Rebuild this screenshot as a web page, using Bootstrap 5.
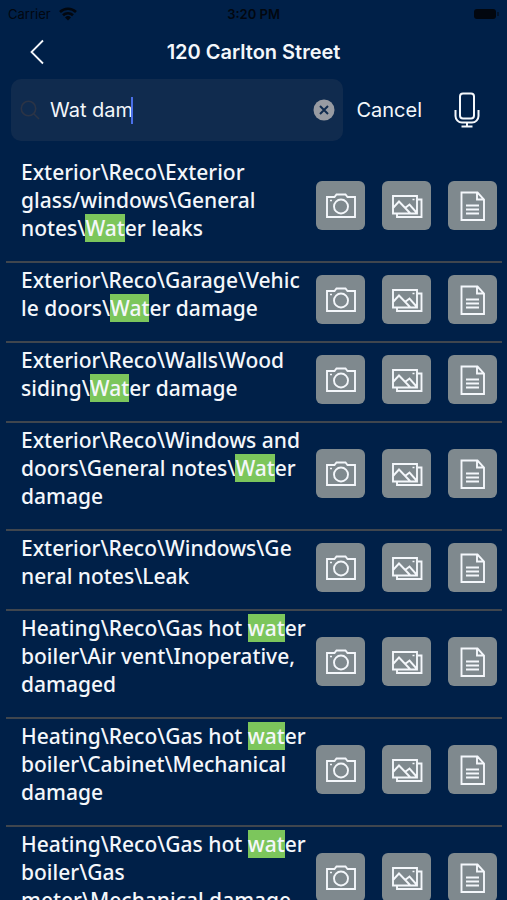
<!DOCTYPE html>
<html lang="en">
<head>
<meta charset="utf-8">
<meta name="viewport" content="width=device-width, initial-scale=1">
<title>120 Carlton Street</title>
<link href="https://cdn.jsdelivr.net/npm/bootstrap@5.3.0/dist/css/bootstrap.min.css" rel="stylesheet">
<style>
body { background: #002048; color: #f4f7fb; font-family: Inter, "Liberation Sans", sans-serif; }
.screen { height: 100vh; }
.screen > * { flex-shrink: 0; }
svg { display: block; fill: none; stroke: currentColor; }
.status { height: 28px; padding: 0 8px; color: #02070f; font-size: 13px; line-height: 28px; }
.status .side, .titlebar .side { flex: 1 1 0; }
.titlebar { height: 48px; padding: 0 20px; }
.titlebar h1 { font-size: 20px; line-height: 28px; font-weight: 600; }
.plain { background: none; border: 0; padding: 0; color: inherit; text-decoration: none; }
.back { padding: 0 10px; }
.searchbar { padding: 3px 27px 14px 11px; }
.field { height: 62px; padding: 0 8px 0 9px; border-radius: 10px; background: #102b4e; }
.glass { color: #2b3446; }
.query { width: 81px; margin-left: 10px; padding: 0; border: 0; outline: 0; background: none; color: inherit; font-size: 20px; line-height: 28px; }
.caret { width: 2px; height: 27px; background: #4a6fe8; }
.cancel { margin-left: 13px; font-size: 20px; line-height: 28px; }
.mic { margin-left: 32px; }
.results { padding: 0 5px 0 6px; }
.result { padding: 3px 5px 0 15px; border-bottom: 2px solid #40464e; }
.path { flex: 1 1 0; min-width: 0; padding-bottom: 19px; font: 500 21px/28px "Noto Sans", "Open Sans", sans-serif; overflow-wrap: anywhere; }
.path mark { padding: 0; background: #7cc65c; color: inherit; }
.actions { gap: 17px; margin-left: 8px; padding-bottom: 8px; }
.tile { width: 49px; height: 49px; border-radius: 6px; background: #7f898e; }
</style>
<script src="https://cdn.jsdelivr.net/npm/bootstrap@5.3.0/dist/js/bootstrap.bundle.min.js" defer></script>
</head>
<body>
<svg class="d-none" aria-hidden="true">
  <symbol id="camera" viewBox="0 0 32 26"><path d="M2 4h7.500l2-2.500h9l2 2.500H30v20H2z" stroke-width="1.900"/><circle cx="16" cy="13.500" r="7" stroke-width="1.900"/><path d="M5 7.500h2" stroke-width="1.500"/></symbol>
  <symbol id="photos" viewBox="0 0 32 26"><path d="M2 3h24v17.500H2zM27 6.500h3.500V24H6v-3M2 15l6-6.500 11 11.500M13.500 15.500l5-4 7 8" stroke-width="1.900"/><path d="M21.500 6.500h2" stroke-width="1.500"/></symbol>
  <symbol id="note" viewBox="0 0 26 32"><path d="M1.500 2.500h16l6.500 7v20.500H1.500zM17 2.500v7h7M6 15.500h13M6 19.500h13M6 23.500h13" stroke-width="1.900"/></symbol>
</svg>
<div class="screen d-flex flex-column overflow-hidden">
  <div class="status d-flex align-items-center">
    <div class="side d-flex align-items-center gap-2"><span>Carrier</span>
      <svg width="18" height="14" viewBox="0 0 18 14" stroke-width="2.600" aria-hidden="true"><path d="M1 5a11.500 11.500 0 0 1 16 0M4 8.300a7.200 7.200 0 0 1 10 0"/><path d="M6 10.500a4.300 4.300 0 0 1 6 0L9 13.500z" fill="currentColor" stroke="none"/></svg>
    </div>
    <span class="fw-semibold">3:20 PM</span>
    <div class="side d-flex justify-content-end"><svg width="26" height="12" viewBox="0 0 26 12" aria-label="Battery full"><rect x="1" y="1" width="22" height="10" rx="3" fill="currentColor" stroke="none"/><path d="M25 4v4"/></svg></div>
  </div>
  <header class="titlebar d-flex align-items-center">
    <div class="side d-flex"><button type="button" class="plain back" aria-label="Back"><svg width="14" height="26" viewBox="0 0 14 26" stroke-width="1.800"><path d="M13 1.500 1.500 13 13 24.500"/></svg></button></div>
    <h1 class="m-0">120 Carlton Street</h1>
    <div class="side"></div>
  </header>
  <form class="searchbar d-flex align-items-center" role="search">
    <div class="field d-flex align-items-center flex-grow-1">
      <svg class="glass" width="20" height="20" viewBox="0 0 20 20" stroke-width="1.600" aria-hidden="true"><circle cx="8.500" cy="8.500" r="7.200"/><path d="m13.700 13.700 5.300 5.300"/></svg>
      <input class="query" type="text" value="Wat dam" aria-label="Search">
      <span class="caret" aria-hidden="true"></span>
      <button type="button" class="plain ms-auto" aria-label="Clear search"><svg width="22" height="22" viewBox="0 0 22 22"><circle cx="11" cy="11" r="10.500" fill="#989ba2" stroke="none"/><path d="m7 7 8 8m0-8-8 8" stroke="#102b4e" stroke-width="2"/></svg></button>
    </div>
    <button type="button" class="plain cancel">Cancel</button>
    <button type="button" class="plain mic" aria-label="Dictate"><svg width="26" height="36" viewBox="0 0 26 36" stroke-width="2"><rect x="6" y="1.500" width="14" height="25" rx="3"/><path d="M1.500 18v6a6.500 6.500 0 0 0 6.500 6.500h10a6.500 6.500 0 0 0 6.500-6.500v-6M13 30.500V34M7.500 34.500h11"/></svg></button>
  </form>
  <main class="results" id="results"></main>
</div>
<script>
const items = [
  "Exterior\\Reco\\Exterior glass/windows\\General notes\\[Wat]er leaks",
  "Exterior\\Reco\\Garage\\Vehic<br>le doors\\[Wat]er damage",
  "Exterior\\Reco\\Walls\\Wood siding\\[Wat]er damage",
  "Exterior\\Reco\\Windows and doors\\General notes\\[Wat]er damage",
  "Exterior\\Reco\\Windows\\Ge<br>neral notes\\Leak",
  "Heating\\Reco\\Gas hot [wat]er boiler\\Air vent\\Inoperative, damaged",
  "Heating\\Reco\\Gas hot [wat]er boiler\\Cabinet\\Mechanical damage",
  "Heating\\Reco\\Gas hot [wat]er boiler\\Gas meter\\Mechanical damage"
];
const tile = (id, label, w, h) => `<button type="button" class="tile plain d-flex align-items-center justify-content-center" aria-label="${label}"><svg width="${w}" height="${h}"><use href="#${id}"/></svg></button>`;
document.getElementById("results").innerHTML = items.map(t => `<div class="result d-flex align-items-center">
  <div class="path">${t.replace("[", "<mark>").replace("]", "</mark>")}</div>
  <div class="actions d-flex flex-shrink-0">${tile("camera", "Take photo", 32, 26)}${tile("photos", "Photo library", 32, 26)}${tile("note", "Notes", 26, 32)}</div>
</div>`).join("");
</script>
</body>
</html>
